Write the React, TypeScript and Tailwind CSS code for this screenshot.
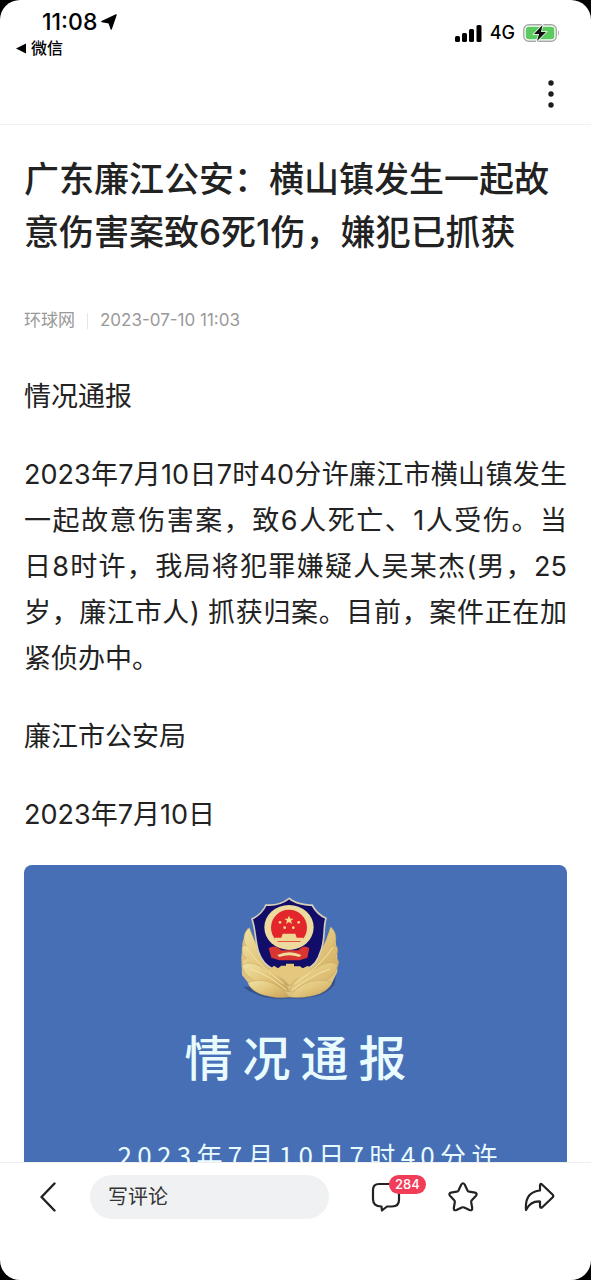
import React, { useState } from 'react';

const noticeLines = [
  '2023年7月10日7时40分许廉江市横山镇发生',
  '一起故意伤害案，致6人死亡、1人受伤。当',
  '日8时许，我局将犯罪嫌疑人吴某杰(男，25',
  '岁，廉江市人) 抓获归案。目前，案件正在加',
];

function StatusBar() {
  return (
    <div className="flex justify-between pl-4 pr-[30px] pt-2 h-16 shrink-0 text-black">
      <div>
        <div className="flex items-center gap-1 pl-[26px] h-7">
          <span className="text-[23px] font-medium">11:08</span>
          <svg width="16" height="16" viewBox="0 0 18 18" fill="currentColor">
            <path d="M17 1L11.500 17L9 10L1 8.500Z" stroke="currentColor" strokeWidth="1.500" strokeLinejoin="round" />
          </svg>
        </div>
        <button type="button" className="flex items-center gap-1 h-6 text-base font-medium">
          <svg width="11" height="11" viewBox="0 0 11 11" fill="currentColor">
            <path d="M0 5.500L10 0.500V10.500Z" />
          </svg>
          微信
        </button>
      </div>
      <div className="flex items-center gap-2 h-[50px]">
        <svg width="27" height="17" viewBox="0 0 27 17" fill="currentColor">
          <rect x="0" y="11" width="5" height="6" rx="1.500" />
          <rect x="7" y="8" width="5" height="9" rx="1.500" />
          <rect x="14" y="4" width="5" height="13" rx="1.500" />
          <rect x="21.500" y="0" width="5" height="17" rx="1.500" />
        </svg>
        <span className="text-lg font-medium">4G</span>
        <svg width="38" height="18" viewBox="0 0 38 18">
          <rect x="0.800" y="0.800" width="32.500" height="16.400" rx="5" fill="none" stroke="#a3aaa3" strokeWidth="1.400" />
          <rect x="2.800" y="2.800" width="28.500" height="12.400" rx="3" fill="#5bcb5f" />
          <path d="M35 6Q37 9 35 12Z" fill="#a3aaa3" />
          <path d="M19.500 1L11 10H16L14 17L23 8H18Z" fill="#111" stroke="#fff" strokeWidth="1.500" paintOrder="stroke" />
        </svg>
      </div>
    </div>
  );
}

function Emblem() {
  return (
    <svg width="100" height="104" viewBox="60 50 300 312">
      <defs>
        <linearGradient id="gold" x1="0" y1="0" x2="1" y2="1">
          <stop offset="0" stopColor="#f0e2a4" />
          <stop offset="0.500" stopColor="#e2c57a" />
          <stop offset="1" stopColor="#c9a35a" />
        </linearGradient>
      </defs>
      <path d="M70 325Q120 368 210 360Q310 366 344 318L350 262L300 330Z" fill="#28406c" opacity="0.6" />
      {/* wheat leaves */}
      <path d="M84 148L68 190L64 240L66 290L88 318L120 346L208 356L300 346L336 314L352 280L352 230L346 180L332 146L300 240H120Z" fill="#dfc481" />
      <g fill="url(#gold)" stroke="#c2a468" strokeWidth="1.500">
        <path d="M88 148C70 162 68 182 78 202C62 196 62 226 80 240C62 242 64 262 76 276C92 292 140 306 208 322L150 262C124 232 106 196 88 148Z" />
        <path d="M332 146C350 162 352 184 340 202C356 198 358 226 342 238C360 240 360 262 342 276C322 294 276 308 208 322L268 262C296 232 318 196 332 146Z" />
        <path d="M66 262C80 248 110 254 138 274C172 284 196 304 208 340C180 336 150 330 118 314C92 304 72 288 66 262Z" />
        <path d="M352 260C338 246 312 252 284 272C246 284 220 304 208 340C238 336 270 330 300 314C330 302 348 288 352 260Z" />
        <path d="M84 314C110 300 168 302 208 356C166 362 96 350 84 314Z" />
        <path d="M336 312C304 300 248 302 208 356C254 362 324 350 336 312Z" />
      </g>
      <path d="M76 206Q118 262 190 316M340 206Q302 262 226 316M92 272Q150 292 200 336M330 272Q270 292 216 336" fill="none" stroke="#f5e4a6" strokeWidth="3" />
      {/* shield */}
      <path d="M208 60C222 74 258 82 276 80C286 98 300 112 318 120C308 152 318 184 300 224C294 248 280 262 262 272L158 272C138 262 124 246 116 222C104 184 108 156 96 122C116 112 130 98 138 80C164 82 190 74 208 60Z" fill="#110d69" stroke="#d5cfb8" strokeWidth="5" />
      <path d="M142 278L162 262L174 270L184 262H198V256H222V264H240L248 270L264 262L276 278Q250 292 230 300L208 316L184 298Z" fill="#e5c77d" />
      {/* national emblem */}
      <ellipse cx="207" cy="147" rx="74" ry="67" fill="#edda9e" />
      <path d="M146 210Q166 196 184 216H234Q252 196 268 210L262 238L238 246H178L154 238Z" fill="#d93532" />
      <circle cx="207" cy="148" r="54" fill="#e3262b" />
      <path d="M207 112L211 121L221 121L213 127L216 137L207 131L198 137L201 127L193 121L203 121Z" fill="#f6dc8b" />
      <g fill="#f6dc8b">
        <circle cx="180" cy="132" r="4" />
        <circle cx="194" cy="148" r="4" />
        <circle cx="220" cy="148" r="4" />
        <circle cx="236" cy="132" r="4" />
      </g>
      <path d="M188 166H226L230 178H250V188H164V178H184Z" fill="#eed894" />
      <path d="M154 190H262Q244 212 208 214Q170 210 154 190Z" fill="#edda9e" />
      <path d="M172 230Q208 214 244 230L238 236Q208 226 178 236Z" fill="#f2dc9a" />
    </svg>
  );
}

// Even tracking between every character, digits included
function SpacedText({ text }: { text: string }) {
  return (
    <p className="flex justify-between w-[380px] max-w-full text-[26px] leading-8">
      {Array.from(text).map((c, i) => (
        <span key={i}>{c}</span>
      ))}
    </p>
  );
}

export default function App() {
  const [comment, setComment] = useState('');

  return (
    <div className="h-screen bg-black font-[Inter,'Noto_Sans_CJK_SC',sans-serif]">
      <div className="h-full flex flex-col bg-white rounded-[20px] overflow-hidden">
        <StatusBar />

        <header className="flex justify-end items-center h-[61px] px-7 shrink-0 border-b border-[#f0f0f0]">
          <button type="button" aria-label="更多" className="px-2">
            <svg width="8" height="28" viewBox="0 0 8 28" fill="#1c1c1c">
              <circle cx="4" cy="3" r="2.700" />
              <circle cx="4" cy="14" r="2.700" />
              <circle cx="4" cy="25" r="2.700" />
            </svg>
          </button>
        </header>

        <main className="flex-1 min-h-0 overflow-hidden px-6 pt-7 text-[#222]">
          <h1 className="text-[35px] leading-[53px] font-medium">
            广东廉江公安：横山镇发生一起故意伤害案致6死1伤，嫌犯已抓获
          </h1>

          <div className="flex items-center gap-3 mt-[50px] h-6 text-[17px] text-[#999]">
            <span>环球网</span>
            <span className="w-px h-4 bg-[#e4e4e4]" />
            <time dateTime="2023-07-10T11:03">2023-07-10 11:03</time>
          </div>

          <article className="mt-[41px] space-y-8 text-[27px] leading-[46px]">
            <p>情况通报</p>
            <p>
              {noticeLines.map((line) => (
                <span key={line} className="block whitespace-nowrap text-justify [text-align-last:justify]">{line}</span>
              ))}
              <span className="block">紧侦办中。</span>
            </p>
            <p>廉江市公安局</p>
            <p>2023年7月10日</p>
          </article>

          <figure className="flex flex-col items-center mt-[27px] pt-[30px] pb-20 rounded-lg bg-[#466fb6] text-[#e8fbff] font-['Noto_Sans_CJK_SC',sans-serif]">
            <div className="mr-3">
              <Emblem />
            </div>
            <h2 className="w-[222px] mt-5 text-5xl leading-[72px] font-medium [text-align-last:justify]">情况通报</h2>
            <div className="mt-12 ml-6">
              <SpacedText text="2023年7月10日7时40分许" />
            </div>
          </figure>
        </main>

        <footer className="flex items-start h-[118px] shrink-0 pl-10 pr-9 pt-3 border-t border-[#eeeeee] text-[#222]">
          <button type="button" aria-label="返回" className="flex items-center h-11">
            <svg width="16" height="30" viewBox="0 0 16 30" fill="none" stroke="currentColor" strokeWidth="2.400" strokeLinecap="round" strokeLinejoin="round">
              <path d="M14.500 1.500L1.500 15L14.500 28.500" />
            </svg>
          </button>
          <input
            type="text"
            aria-label="写评论"
            placeholder="写评论"
            className="flex-1 min-w-0 h-11 ml-[34px] mr-[42px] px-[18px] rounded-full bg-[#f0f1f2] text-xl placeholder:text-[#333] focus:outline-none"
            value={comment}
            onChange={(e) => setComment(e.target.value)}
          />
          <div className="flex items-center gap-11 h-11">
            <button type="button" aria-label="评论 284" className="relative">
              <svg width="32" height="32" viewBox="0 0 32 32" fill="none" stroke="currentColor" strokeWidth="2.200" strokeLinejoin="round">
                <path d="M8 3H22Q28 3 28 9V19Q28 25.500 21 25.500H16L11 29.500L10.500 25.500Q2 25.500 2 18V9Q2 3 8 3Z" />
              </svg>
              <span className="absolute left-[18px] -top-1.5 px-1.5 h-[19px] rounded-full bg-[#f23d59] text-white text-[13px] leading-[19px] font-medium">284</span>
            </button>
            <button type="button" aria-label="收藏">
              <svg width="32" height="32" viewBox="0 0 32 32" fill="none" stroke="currentColor" strokeWidth="2.200" strokeLinejoin="round">
                <path d="M14.300 3.500Q16 1 17.700 3.500L20.500 9.500Q21 10.500 22.200 10.700L28 11.600Q30.700 12.300 29 14.700L24.800 19.200Q24 20 24.200 21.200L25.200 27Q25.400 30 22.500 29L17.200 26.500Q16 26 14.800 26.500L9.500 29Q6.600 30 6.800 27L7.800 21.200Q8 20 7.200 19.200L3 14.700Q1.300 12.300 4 11.600L9.800 10.700Q11 10.500 11.500 9.500Z" />
              </svg>
            </button>
            <button type="button" aria-label="分享">
              <svg width="32" height="32" viewBox="0 0 32 32" fill="none" stroke="currentColor" strokeWidth="2.200" strokeLinejoin="round">
                <path d="M17 9.500V4.500Q17 2 19 3.500L29.500 13.500Q31 15 29.500 16.500L19.500 26Q17 27.800 17 25V20.500Q7.500 20 3 29Q1.500 11 17 9.500Z" />
              </svg>
            </button>
          </div>
        </footer>
      </div>
    </div>
  );
}
